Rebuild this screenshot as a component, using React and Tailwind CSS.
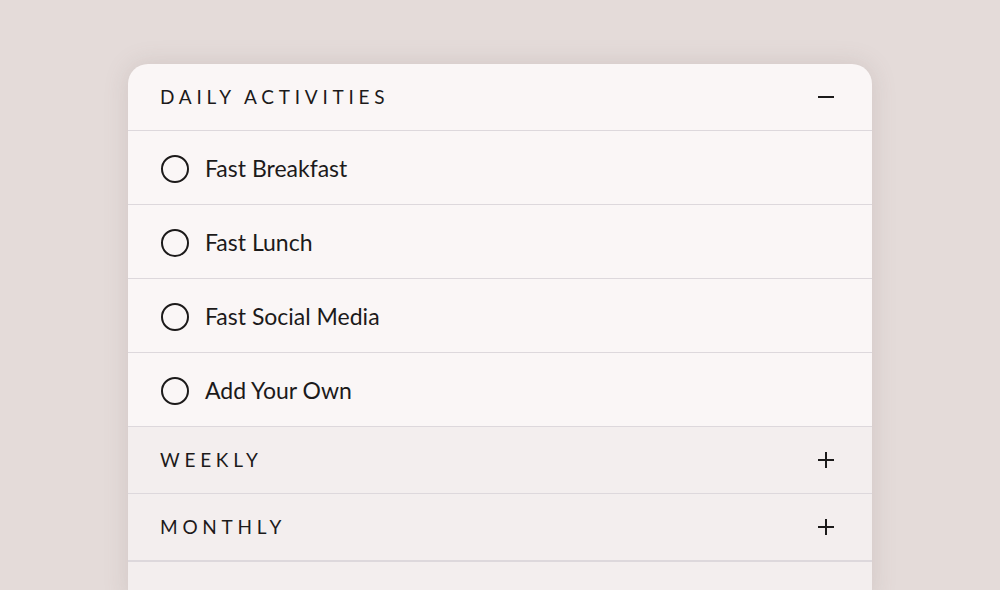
import React from "react";

const daily = ["Fast Breakfast", "Fast Lunch", "Fast Social Media", "Add Your Own"];

function Minus() {
  return (
    <svg width="18" height="18" viewBox="0 0 18 18" className="text-[#1c1a1a]">
      <path d="M1 9h16" stroke="currentColor" strokeWidth="2" />
    </svg>
  );
}

function Plus() {
  return (
    <svg width="18" height="18" viewBox="0 0 18 18" className="text-[#1c1a1a]">
      <path d="M1 9h16M9 1v16" stroke="currentColor" strokeWidth="2" />
    </svg>
  );
}

function SectionHeader({ title, open }) {
  return (
    <div
      className={
        "flex items-center justify-between pl-[32px] pr-[37px] " +
        (open ? "h-[66px]" : "h-[67px] bg-[#f3eeee] border-t border-[#ddd8dc]")
      }
    >
      <span className="text-[19px] tracking-[0.25em] text-[#1c1a1a]">{title}</span>
      {open ? <Minus /> : <Plus />}
    </div>
  );
}

export default function App() {
  return (
    <div
      className="w-[1000px] h-[590px] overflow-hidden bg-[#e4dbd9] pt-[64px]"
      style={{ fontFamily: "Lato, 'Open Sans', sans-serif" }}
    >
      <div className="ml-[128px] w-[744px] bg-[#faf6f6] rounded-t-[20px] shadow-[0_0_24px_rgba(120,100,100,0.18)] overflow-hidden">
        <SectionHeader title="DAILY ACTIVITIES" open />
        {daily.map((item) => (
          <div
            key={item}
            className="h-[74px] border-t border-[#ddd8dc] flex items-center pl-[33px] pt-[2px]"
          >
            <span className="w-[28px] h-[28px] rounded-full border-2 border-[#1c1a1a]" />
            <span className="ml-[16px] text-[23px] text-[#1c1a1a]">{item}</span>
          </div>
        ))}
        <SectionHeader title="WEEKLY" />
        <SectionHeader title="MONTHLY" />
        <div className="h-[40px] bg-[#f3eeee] border-t-2 border-[#ddd8dc]" />
      </div>
    </div>
  );
}
